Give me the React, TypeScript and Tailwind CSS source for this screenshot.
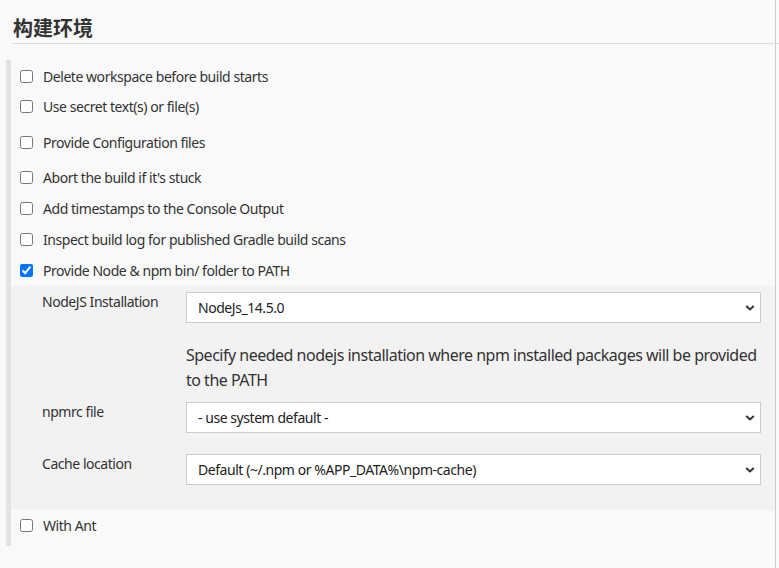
import React from 'react';

const font = { fontFamily: '"Noto Sans", "Open Sans", "Noto Sans CJK SC", sans-serif' };

const Check = ({ label, checked = false, className = '' }: { label: string; checked?: boolean; className?: string }) => (
    <label className={`flex items-center h-[31px] pl-[9px] ${className}`}>
        <input type="checkbox" defaultChecked={checked} className="w-[13px] h-[13px] m-0 accent-[#0075ff]" />
        <span className="ml-[10px] text-[14px] tracking-[-0.45px] text-[#333]">{label}</span>
    </label>
);

const Chevron = () => (
    <svg className="absolute right-[6px] top-1/2 -translate-y-1/2 pointer-events-none" width="10" height="7" viewBox="0 0 10 7">
        <path d="M1.2 1.5 L5 5 L8.8 1.5" fill="none" stroke="#333" strokeWidth="2" />
    </svg>
);

const Select = ({ value }: { value: string }) => (
    <div className="relative w-[575px]">
        <select
            defaultValue={value}
            style={font}
            className="appearance-none w-full h-[31px] bg-white border border-[#ccc] pl-[11px] pr-6 text-[14px] tracking-[-0.45px] text-[#222] outline-none"
        >
            <option>{value}</option>
        </select>
        <Chevron />
    </div>
);

const Field = ({ label, value, className = '' }: { label: string; value: string; className?: string }) => (
    <div className={`flex ${className}`}>
        <div className="w-[144px] text-[14px] tracking-[-0.45px] text-[#333] leading-[20px]">{label}</div>
        <Select value={value} />
    </div>
);

export default function App() {
    return (
        <div style={font} className="w-[779px] h-[568px] bg-[#f9f9f9] overflow-hidden">
            <div className="w-[776px] h-full border-r border-[#ccc]">
                <div className="pt-[14px] pl-[13px]">
                    <h2 className="text-[20px] font-bold text-[#333] leading-[29px] border-b border-[#ddd] mr-[-4px]">构建环境</h2>
                </div>

                <div className="mt-[16px] ml-[6px] pb-[5px] border-l-[5px] border-[#e2e2e2]">
                    <Check label="Delete workspace before build starts" className="pt-[1px]" />
                    <Check label="Use secret text(s) or file(s)" />
                    <Check label="Provide Configuration files" className="mt-[5px]" />
                    <Check label="Abort the build if it's stuck" className="mt-[4px]" />
                    <Check label="Add timestamps to the Console Output" />
                    <Check label="Inspect build log for published Gradle build scans" />
                    <Check label="Provide Node & npm bin/ folder to PATH" checked />

                    <div className="bg-[#f2f2f2] pl-[31px] pt-[6px] pb-[25px]">
                        <Field label="NodeJS Installation" value="NodeJs_14.5.0" />
                        <p className="ml-[144px] w-[580px] mt-[20px] text-[16px] leading-[25px] tracking-[-0.5px] text-[#333]">
                            Specify needed nodejs installation where npm installed packages will be provided to the PATH
                        </p>
                        <Field label="npmrc file" value="- use system default -" className="mt-[9px]" />
                        <Field label="Cache location" value="Default (~/.npm or %APP_DATA%\npm-cache)" className="mt-[21px]" />
                    </div>

                    <Check label="With Ant" />
                </div>
            </div>
        </div>
    );
}
